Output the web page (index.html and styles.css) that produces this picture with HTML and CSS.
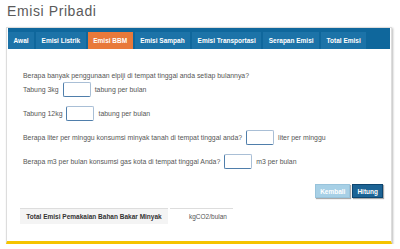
FILE: index.html
```html
<!DOCTYPE html>
<html lang="id">
<head>
    <meta charset="UTF-8">
    <title>Emisi Pribadi</title>
    <link rel="stylesheet" href="styles.css">
</head>
<body>
    <h1 class="page-title">Emisi Pribadi</h1>
    <div class="panel">
        <ul class="tabs">
            <li class="tab">Awal</li>
            <li class="tab">Emisi Listrik</li>
            <li class="tab active">Emisi BBM</li>
            <li class="tab">Emisi Sampah</li>
            <li class="tab">Emisi Transportasi</li>
            <li class="tab">Serapan Emisi</li>
            <li class="tab">Total Emisi</li>
        </ul>

        <form class="calc">
            <p class="question">Berapa banyak penggunaan elpiji di tempat tinggal anda setiap bulannya?</p>
            <div class="row row-first">
                <label for="t3">Tabung 3kg</label>
                <input type="text" id="t3" class="field">
                <span>tabung per bulan</span>
            </div>
            <div class="row">
                <label for="t12">Tabung 12kg</label>
                <input type="text" id="t12" class="field">
                <span>tabung per bulan</span>
            </div>
            <div class="row">
                <label for="minyak">Berapa liter per minggu konsumsi minyak tanah di tempat tinggal anda?</label>
                <input type="text" id="minyak" class="field">
                <span>liter per minggu</span>
            </div>
            <div class="row">
                <label for="gas">Berapa m3 per bulan konsumsi gas kota di tempat tinggal Anda?</label>
                <input type="text" id="gas" class="field">
                <span>m3 per bulan</span>
            </div>
            <div class="actions">
                <button type="button" class="btn btn-back">Kembali</button>
                <button type="submit" class="btn btn-calc">Hitung</button>
            </div>
        </form>

        <div class="total">
            <div class="total-label">Total Emisi Pemakaian Bahan Bakar Minyak</div>
            <div class="total-unit">kgCO2/bulan</div>
        </div>
    </div>
</body>
</html>
```

FILE: styles.css
```css
body {
    font-family: "Liberation Sans", Arial, sans-serif;
    background-color: #fff;
    margin: 0;
    padding: 3px 8px 0 6px;
    color: #444;
}
.page-title {
    font-family: "Liberation Sans Narrow", "Liberation Sans", sans-serif;
    font-weight: normal;
    font-size: 14px;
    letter-spacing: 0.6px;
    line-height: 16px;
    color: #5a5a5a;
    margin: 0 0 8px 1px;
}
.panel {
    border: 1px solid #ddd;
    border-bottom: 3px solid #f5c400;
    box-shadow: 1px 1px 2px #bbb;
    padding: 0 0 17px 0;
}
.tabs {
    list-style: none;
    display: flex;
    gap: 2px;
    margin: 0 1px;
    padding: 4px 0 0 0;
    height: 17px;
    background-color: #0f679c;
}
.tab {
    display: flex;
    align-items: center;
    padding: 0 5.5px;
    white-space: nowrap;
    background-color: #1c73a8;
    color: #fff;
    font-size: 6.5px;
    font-weight: bold;
}
.tab.active {
    background-color: #e8793a;
}
.calc {
    padding: 22px 8px 0 16px;
    font-size: 6.9px;
    line-height: 9px;
    color: #555;
}
.question {
    margin: 0;
}
.row {
    display: flex;
    align-items: center;
    gap: 4px;
    margin-top: 9px;
}
.row-first {
    margin-top: 2px;
}
.field {
    width: 28px;
    height: 15px;
    box-sizing: border-box;
    margin: 0;
    padding: 0;
    border: 1px solid #a9bfd6;
    border-left-color: #4f7eab;
    border-bottom-color: #4f7eab;
    border-radius: 2px;
    background: #fff;
}
.actions {
    display: flex;
    justify-content: flex-end;
    gap: 2px;
    margin-top: 15px;
}
.btn {
    height: 14px;
    padding: 0 4px;
    font-family: "Liberation Sans", Arial, sans-serif;
    font-size: 6.5px;
    font-weight: bold;
    color: #fff;
    border: 1px solid;
    box-shadow: 1px 1px 1px #aaa;
    cursor: pointer;
}
.btn-back {
    background-color: #a7d0e6;
    border-color: #98c3db;
}
.btn-calc {
    background-color: #1d6495;
    border-color: #0d4670;
}
.total {
    display: flex;
    gap: 2px;
    margin: 10px 0 0 13px;
    font-size: 6.5px;
}
.total-label {
    width: 148px;
    height: 15px;
    line-height: 15px;
    text-align: center;
    font-weight: bold;
    color: #333;
    background-color: #f4f4f4;
    border-top: 1px solid #ddd;
}
.total-unit {
    width: 44px;
    height: 15px;
    line-height: 15px;
    padding-left: 19px;
    color: #555;
    border-top: 1px solid #ddd;
}
```
